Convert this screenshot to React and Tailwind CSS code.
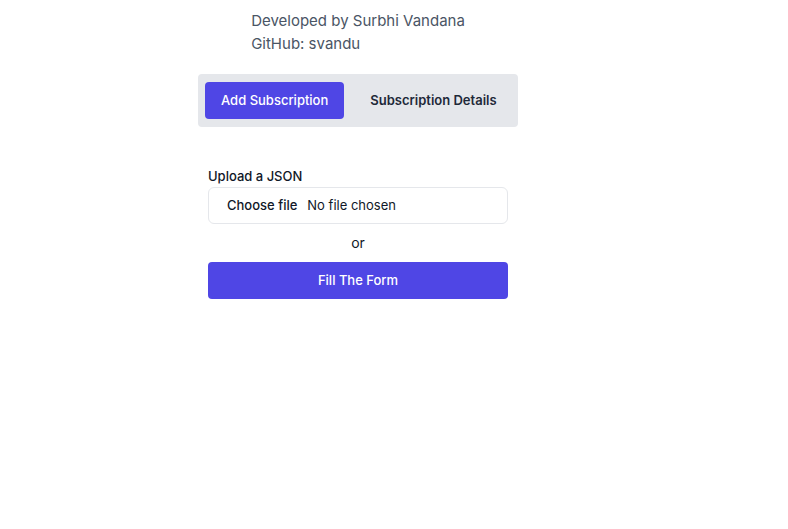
import React, { useState } from 'react';

const App = () => {
  const [tab, setTab] = useState('add');

  return (
    <div className="min-h-screen bg-white font-['Inter',sans-serif]">
      <div className="w-[716px] flex flex-col items-center pt-[9px]">
        <div className="text-[15px] leading-[23px] text-gray-600">
          <p>Developed by Surbhi Vandana</p>
          <p>GitHub: svandu</p>
        </div>

        <div className="mt-[19px] w-[320px] h-[53px] bg-gray-200 rounded flex items-center px-[7px] gap-[10px]">
          <button
            onClick={() => setTab('add')}
            className={`h-[37px] px-4 rounded text-[13px] font-medium whitespace-nowrap ${
              tab === 'add' ? 'bg-[#4f46e5] text-white' : 'text-gray-800'
            }`}
          >
            Add Subscription
          </button>
          <button
            onClick={() => setTab('details')}
            className={`h-[37px] px-4 rounded text-[13px] font-semibold whitespace-nowrap ${
              tab === 'details' ? 'bg-[#4f46e5] text-white' : 'text-gray-800'
            }`}
          >
            Subscription Details
          </button>
        </div>

        <div className="mt-[39px] w-[300px]">
          <label className="block text-[13px] leading-5 font-medium text-gray-900 mb-[1px]">Upload a JSON</label>
          <div className="h-[37px] border border-gray-200 rounded-md flex items-center pl-[18px] text-[13px] text-gray-900">
            <span className="font-medium mr-[10px]">Choose file</span>
            <span>No file chosen</span>
          </div>
          <p className="text-center text-sm text-gray-900 mt-[9px] leading-5">or</p>
          <button className="mt-[9px] w-full h-[37px] bg-[#4f46e5] text-white text-[13px] font-medium rounded">
            Fill The Form
          </button>
        </div>
      </div>
    </div>
  );
};

export default App;
